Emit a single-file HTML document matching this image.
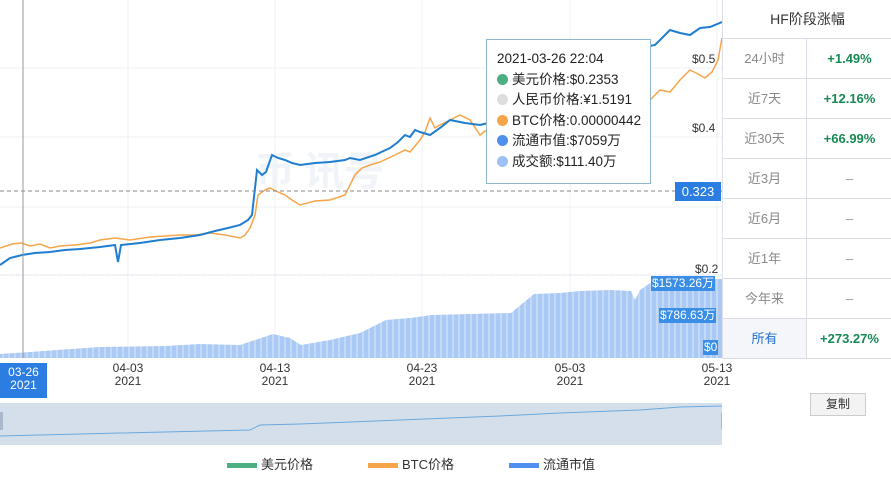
<!DOCTYPE html>
<html><head><meta charset="utf-8"><style>
body{margin:0;width:891px;height:492px;background:#fff;font-family:"Liberation Sans","Noto Sans CJK SC",sans-serif;position:relative;overflow:hidden}
.tbl{position:absolute;left:722px;top:0;width:169px;border-left:1px solid #e0e0ea}
.hd{height:38px;line-height:38px;text-align:center;font-size:14px;color:#333;border-bottom:1px solid #dcdce6}
.r{height:39px;border-bottom:1px solid #dcdce6;display:flex;font-size:13px;line-height:39px}
.r .a{width:83px;text-align:center;color:#888;border-right:1px solid #dcdce6}
.r .b{flex:1;text-align:center;color:#999}
.g{color:#168a55!important;font-weight:bold}
.tt{position:absolute;left:486px;top:39px;width:165px;height:145px;background:#fff;border:1px solid #8fb8d0;font-size:13.5px;color:#222;box-sizing:border-box;padding:9px 0 0 10px;line-height:20.5px}
.tt i{display:inline-block;width:11px;height:11px;border-radius:50%;margin-right:4px;vertical-align:-1px}
.vl{position:absolute;background:#3a8ee6;color:#fff;font-size:12px;line-height:15px;padding:0 1px}
.xl{position:absolute;top:362px;font-size:12px;color:#333;text-align:center;width:50px;line-height:13px}
</style></head><body>
<svg width="722" height="450" style="position:absolute;left:0;top:0">
<g stroke="#eef0f4" stroke-width="1">
<line x1="128" y1="0" x2="128" y2="358"/><line x1="275" y1="0" x2="275" y2="358"/><line x1="422" y1="0" x2="422" y2="358"/><line x1="570" y1="0" x2="570" y2="358"/><line x1="717" y1="0" x2="717" y2="358"/>
<line x1="0" y1="68" x2="722" y2="68"/><line x1="0" y1="137" x2="722" y2="137"/><line x1="0" y1="207" x2="722" y2="207"/>
</g>
<line x1="0" y1="275" x2="722" y2="275" stroke="#dde3ee"/>
<text x="255" y="185" font-size="40" font-weight="bold" fill="#f0f4f8" font-family="Noto Sans CJK SC">币 讯号</text>
<polygon fill="#aac9f5" points="0,358 0,354 30,352 57,350 100,347 165,346 200,344 240,345 273,334 290,338 301,345 330,340 360,333 386,320 410,318 432,315 470,314 511,313 534,294 560,293 580,291 610,290 631,291 635,300 640,290 653,281 690,280 716,279 722,279 722,358"/>
<g stroke="#fff" stroke-width="1" opacity="0.6">
<path d="M3 270V358M9 270V358M15 270V358M21 270V358M27 270V358M33 270V358M39 270V358M45 270V358M51 270V358M57 270V358M63 270V358M69 270V358M75 270V358M81 270V358M87 270V358M93 270V358M99 270V358M105 270V358M111 270V358M117 270V358M123 270V358M129 270V358M135 270V358M141 270V358M147 270V358M153 270V358M159 270V358M165 270V358M171 270V358M177 270V358M183 270V358M189 270V358M195 270V358M201 270V358M207 270V358M213 270V358M219 270V358M225 270V358M231 270V358M237 270V358M243 270V358M249 270V358M255 270V358M261 270V358M267 270V358M273 270V358M279 270V358M285 270V358M291 270V358M297 270V358M303 270V358M309 270V358M315 270V358M321 270V358M327 270V358M333 270V358M339 270V358M345 270V358M351 270V358M357 270V358M363 270V358M369 270V358M375 270V358M381 270V358M387 270V358M393 270V358M399 270V358M405 270V358M411 270V358M417 270V358M423 270V358M429 270V358M435 270V358M441 270V358M447 270V358M453 270V358M459 270V358M465 270V358M471 270V358M477 270V358M483 270V358M489 270V358M495 270V358M501 270V358M507 270V358M513 270V358M519 270V358M525 270V358M531 270V358M537 270V358M543 270V358M549 270V358M555 270V358M561 270V358M567 270V358M573 270V358M579 270V358M585 270V358M591 270V358M597 270V358M603 270V358M609 270V358M615 270V358M621 270V358M627 270V358M633 270V358M639 270V358M645 270V358M651 270V358M657 270V358M663 270V358M669 270V358M675 270V358M681 270V358M687 270V358M693 270V358M699 270V358M705 270V358M711 270V358M717 270V358"/>
</g>
<polyline fill="none" stroke="#f7a54a" stroke-width="1.5" points="0,248 12,244 22,243 30,246 40,244 50,248 60,246 75,245 90,243 100,240 115,238 130,240 150,237 165,236 180,235 195,235 210,233 225,235 240,238 245,235 250,228 255,215 258,195 265,190 270,188 278,192 285,195 292,200 300,205 315,201 330,200 345,195 350,185 355,175 362,168 370,165 380,162 395,155 405,150 410,152 420,140 425,132 430,118 435,128 440,125 450,120 460,115 470,120 480,135 500,120 520,110 560,102 600,100 650,100 660,90 670,92 680,80 685,75 690,70 698,74 705,78 712,72 718,60 722,38"/>
<polyline fill="none" stroke="#1f7ed0" stroke-width="2" points="0,265 10,258 22,255 35,253 50,252 65,250 80,249 100,247 115,245 118,262 121,245 140,243 160,240 180,238 200,235 215,231 228,228 240,225 248,220 252,215 257,170 262,175 266,172 272,155 278,158 285,160 292,163 300,165 315,163 330,162 345,160 350,158 360,160 375,155 390,148 398,142 405,135 410,137 415,130 420,132 430,135 440,128 450,120 465,123 480,125 500,120 530,100 560,80 600,60 640,48 655,45 660,40 670,30 680,33 690,35 700,28 710,27 722,22"/>
<line x1="0" y1="191" x2="722" y2="191" stroke="#888" stroke-dasharray="4,3"/>
<line x1="23" y1="0" x2="23" y2="358" stroke="#999"/>
<rect x="0" y="403" width="725" height="42" fill="#d5dfeb"/>
<polyline fill="none" stroke="#6aa8de" stroke-width="1" points="0,436 120,433 250,430 260,425 300,424 400,420 500,416 560,413 640,410 680,407 722,406"/>
<rect x="721" y="412" width="8" height="18" rx="2" fill="#aab8cc"/>
<rect x="0" y="412" width="3" height="18" fill="#aab8cc"/>
</svg>
<div style="position:absolute;left:692px;top:52px;font-size:12px;color:#333">$0.5</div>
<div style="position:absolute;left:692px;top:121px;font-size:12px;color:#333">$0.4</div>
<div style="position:absolute;left:695px;top:262px;font-size:12px;color:#333">$0.2</div>
<div class="vl" style="left:675px;top:182px;width:44px;height:19px;line-height:19px;text-align:center;font-size:13px;background:#2b7de1">0.323</div>
<div class="vl" style="left:651px;top:276px">$1573.26万</div>
<div class="vl" style="left:659px;top:308px">$786.63万</div>
<div class="vl" style="left:703px;top:340px">$0</div>
<div class="tt">2021-03-26 22:04<br><i style="background:#4caf82"></i>美元价格:$0.2353<br><i style="background:#ddd"></i>人民币价格:¥1.5191<br><i style="background:#f7a54a"></i>BTC价格:0.00000442<br><i style="background:#4f8ff0"></i>流通市值:$7059万<br><i style="background:#9dc1f6"></i>成交额:$111.40万</div>
<div style="position:absolute;left:0;top:363px;width:47px;height:35px;background:#2b7de1;color:#fff;font-size:12px;text-align:center;line-height:13px;padding-top:3px;box-sizing:border-box">03-26<br>2021</div>
<div class="xl" style="left:103px">04-03<br>2021</div>
<div class="xl" style="left:250px">04-13<br>2021</div>
<div class="xl" style="left:397px">04-23<br>2021</div>
<div class="xl" style="left:545px">05-03<br>2021</div>
<div class="xl" style="left:692px">05-13<br>2021</div>
<div class="tbl">
<div class="hd">HF阶段涨幅</div>
<div class="r"><div class="a">24小时</div><div class="b g">+1.49%</div></div>
<div class="r"><div class="a">近7天</div><div class="b g">+12.16%</div></div>
<div class="r"><div class="a">近30天</div><div class="b g">+66.99%</div></div>
<div class="r"><div class="a">近3月</div><div class="b">–</div></div>
<div class="r"><div class="a">近6月</div><div class="b">–</div></div>
<div class="r"><div class="a">近1年</div><div class="b">–</div></div>
<div class="r"><div class="a">今年来</div><div class="b">–</div></div>
<div class="r"><div class="a" style="color:#1f6fd0;background:#f4f6fa">所有</div><div class="b g">+273.27%</div></div>
</div>
<div style="position:absolute;left:810px;top:393px;width:54px;height:21px;border:1px solid #ccc;background:#f3f3f3;font-size:12px;text-align:center;line-height:21px;color:#333">复制</div>
<div style="position:absolute;top:457px;left:227px;font-size:13px;color:#333;display:flex;gap:0;line-height:16px">
<span style="display:inline-block;width:30px;height:5px;background:#4caf82;margin:6px 4px 0 0"></span><span style="margin-right:55px">美元价格</span>
<span style="display:inline-block;width:30px;height:5px;background:#f7a54a;margin:6px 4px 0 0"></span><span style="margin-right:55px">BTC价格</span>
<span style="display:inline-block;width:30px;height:5px;background:#4f8ff0;margin:6px 4px 0 0"></span><span>流通市值</span>
</div>
</body></html>
